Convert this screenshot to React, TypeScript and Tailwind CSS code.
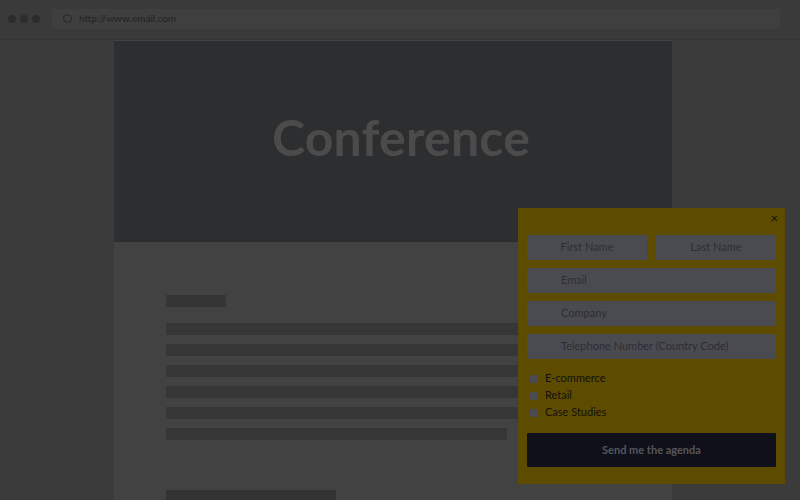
import React from "react"

const lines = ["w-[400px]", "w-[400px]", "w-[400px]", "w-[400px]", "w-[400px]", "w-[341px]"]

const Field = ({ label, center = false }: { label: string; center?: boolean }) => (
  <div
    className={`flex h-[25px] items-center rounded-[1px] bg-[#4a4b50] text-[11px] text-[#2d2e33] ${
      center ? "justify-center" : "pl-[34px]"
    }`}
  >
    {label}
  </div>
)

const App = () => {
  return (
    <div
      className="relative flex h-[500px] w-[800px] flex-col overflow-hidden bg-[#3b3b3b]"
      style={{ fontFamily: "Lato, 'Open Sans', sans-serif" }}
    >
      {/* browser chrome */}
      <div className="flex h-[43px] items-center border-b border-[#353535] bg-[#3a3a3a] pb-[2px] pl-[8px] pr-[20px]">
        <div className="flex gap-[4px]">
          <span className="h-[8px] w-[8px] rounded-full bg-[#2c2c2c]" />
          <span className="h-[8px] w-[8px] rounded-full bg-[#2c2c2c]" />
          <span className="h-[8px] w-[8px] rounded-full bg-[#2c2c2c]" />
        </div>
        <div className="ml-[12px] flex h-[20px] flex-1 items-center gap-[7px] rounded-[2px] bg-[#3f3f3f] pl-[11px] text-[10px] text-[#222]">
          <span className="h-[9px] w-[9px] rounded-full border border-[#252525]" />
          <span>http://www.email.com</span>
        </div>
      </div>

      {/* page */}
      <div className="flex flex-1">
        <div className="ml-[114px] flex w-[558px] flex-col bg-[#424242] pt-[1px]">
          <div className="flex h-[201px] items-center justify-center bg-[#2d2e30] pb-[8px] pl-[16px]">
            <h1 className="text-[50px] font-bold tracking-[0.2px] text-[#4b4b4c]">Conference</h1>
          </div>
          <div className="flex flex-col pl-[52px] pt-[53px]">
            <div className="h-[12px] w-[60px] bg-[#353535]" />
            <div className="mt-[16px] flex flex-col gap-[9px]">
              {lines.map((w, i) => (
                <div key={i} className={`h-[12px] bg-[#363636] ${w}`} />
              ))}
            </div>
            <div className="mt-[50px] h-[10px] w-[170px] bg-[#333]" />
          </div>
        </div>
      </div>

      {/* popup */}
      <div className="absolute left-[518px] top-[208px] flex h-[276px] w-[267px] flex-col bg-[#5d4c00] px-[9px] pt-[27px]">
        <span className="absolute right-[7px] top-0 text-[13px] leading-[20px] text-[#111]">×</span>
        <div className="grid grid-cols-2 gap-[9px]">
          <Field label="First Name" center />
          <Field label="Last Name" center />
        </div>
        <div className="mt-[8px] flex flex-col gap-[8px]">
          <Field label="Email" />
          <Field label="Company" />
          <Field label="Telephone Number (Country Code)" />
        </div>
        <div className="mt-[13px] flex flex-col gap-[4px] pl-[3px] text-[11px] text-[#111]">
          {["E-commerce", "Retail", "Case Studies"].map(t => (
            <label key={t} className="flex h-[13px] items-center gap-[7px]">
              <span className="h-[8px] w-[8px] rounded-[2px] bg-[#4a4b55]" />
              {t}
            </label>
          ))}
        </div>
        <button className="mt-[14px] h-[34px] w-full rounded-[1px] bg-[#0f1019] text-[11px] font-bold text-[#56575c]">
          Send me the agenda
        </button>
      </div>
    </div>
  )
}

export default App
